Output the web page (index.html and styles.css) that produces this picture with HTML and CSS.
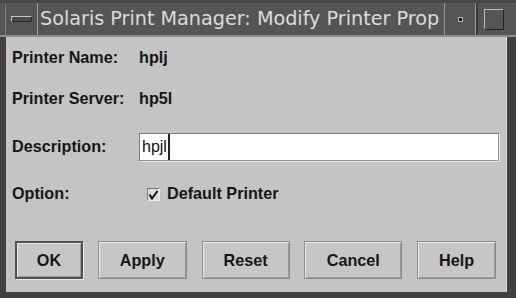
FILE: index.html
```html
<!DOCTYPE html>
<html>
<head>
<meta charset="utf-8">
<link rel="stylesheet" href="styles.css">
</head>
<body>
<div class="window">
  <div class="titlebar">
    <div class="menu-btn"><span class="menu-bar"></span></div>
    <div class="title">Solaris Print Manager: Modify Printer Prop</div>
    <div class="min-btn"><span class="min-dot"></span></div>
    <div class="max-btn"><span class="max-box"></span></div>
  </div>
  <div class="content">
    <div class="form">
      <div class="row r1"><span class="label">Printer Name:</span><span class="value">hplj</span></div>
      <div class="row r2"><span class="label">Printer Server:</span><span class="value">hp5l</span></div>
      <div class="row r3"><span class="label">Description:</span>
        <div class="field"><span class="field-text">hpjl</span><span class="caret"></span></div>
      </div>
      <div class="row r4"><span class="label">Option:</span>
        <span class="check"><svg width="11" height="11" viewBox="0 0 11 11"><path d="M1.5 5.5 L4 9.5 L9.5 2" fill="none" stroke="#111" stroke-width="2"/></svg></span>
        <span class="value">Default Printer</span>
      </div>
    </div>
    <div class="buttons">
      <div class="btn default w-ok">OK</div>
      <div class="btn w-apply">Apply</div>
      <div class="btn w-reset">Reset</div>
      <div class="btn w-cancel">Cancel</div>
      <div class="btn w-help">Help</div>
    </div>
  </div>
</div>
</body>
</html>
```
FILE: styles.css
```css
html, body {
  margin: 0;
  padding: 0;
  background: #3c3c3c;
}
.window {
  width: 516px;
  height: 298px;
  background: #404040;
  display: flex;
  flex-direction: column;
  box-sizing: border-box;
  overflow: hidden;
}
.titlebar {
  height: 37px;
  flex: none;
  display: flex;
  box-sizing: border-box;
  background: #555555;
  border-top: 3px solid #474747;
  border-bottom: 2px solid #8c8c8c;
  padding-left: 5px;
  padding-right: 6px;
}
.menu-btn {
  width: 31px;
  border-left: 1px solid #7a7a7a;
  border-right: 1px solid #9a9a9a;
  display: flex;
  align-items: center;
  justify-content: center;
  flex: none;
}
.menu-bar {
  display: block;
  width: 19px;
  height: 4px;
  background: #4a4a4a;
  border: 1px solid #c8c8c8;
  border-right-color: #2a2a2a;
  border-bottom-color: #2a2a2a;
}
.title {
  flex: 1;
  min-width: 0;
  white-space: nowrap;
  font-family: "DejaVu Sans", sans-serif;
  font-size: 19.2px;
  color: #dcdcdc;
  line-height: 32px;
  padding-left: 2px;
  border-right: 1px solid #9a9a9a;
}
.min-btn {
  width: 30px;
  flex: none;
  display: flex;
  align-items: center;
  justify-content: center;
  border-right: 1px solid #9a9a9a;
}
.min-dot {
  display: block;
  width: 3px;
  height: 3px;
  background: #111;
  border: 1px solid #bbb;
}
.max-btn {
  width: 32px;
  flex: none;
  display: flex;
  align-items: center;
  justify-content: center;
  border-left: 2px solid #3a3a3a;
}
.max-box {
  display: block;
  width: 18px;
  height: 19px;
  border: 1px solid #bdbdbd;
  border-right-color: #222;
  border-bottom-color: #222;
}
.content {
  flex: 1;
  background: #c4c4c4;
  margin: 0 9px 6px 6px;
  display: flex;
  flex-direction: column;
  font-family: "Liberation Sans", Arial, sans-serif;
  font-weight: bold;
  font-size: 16.2px;
  color: #161616;
  border-right: 1px solid #d8d8d8;
}
.form {
  display: flex;
  flex-direction: column;
  padding-left: 6px;
}
.row {
  display: flex;
  align-items: center;
}
.r1 { height: 40px; }
.r2 { height: 42px; }
.r3 { height: 54px; }
.r4 { height: 40px; }
.label {
  width: 127px;
  flex: none;
}
.field {
  flex: 1;
  margin-right: 7px;
  height: 28px;
  box-sizing: border-box;
  background: #ffffff;
  border: 1px solid #7a7a7a;
  border-right-color: #909090;
  border-bottom-color: #909090;
  box-shadow: 1px 1px 0 #ececec;
  display: flex;
  align-items: center;
  padding-left: 2px;
  margin-top: 2px;
}
.field-text {
  font-weight: normal;
  font-size: 16px;
  font-family: "Liberation Sans", Arial, sans-serif;
  color: #111;
}
.caret {
  display: block;
  width: 2px;
  height: 26px;
  background: #222;
  margin-left: 1px;
}
.check {
  width: 13px;
  height: 13px;
  box-sizing: border-box;
  margin-left: 8px;
  margin-right: 7px;
  margin-top: 2px;
  background: #dcdcdc;
  border: 1px solid #7a7a7a;
  border-right-color: #eeeeee;
  border-bottom-color: #eeeeee;
  display: flex;
  align-items: center;
  justify-content: center;
}
.check svg { display: block; }
.buttons {
  margin-top: 28px;
  display: flex;
  justify-content: space-between;
  padding: 0 10px 0 9px;
}
.btn {
  height: 38px;
  box-sizing: border-box;
  display: flex;
  align-items: center;
  justify-content: center;
  border: 1px solid #8a8a8a;
  box-shadow: inset 1px 1px 0 #ececec, inset -1px -1px 0 #9a9a9a;
  background: #c6c6c6;
}
.btn.default {
  border: 2px solid #505050;
  box-shadow: inset 1px 1px 0 #e6e6e6, inset -1px -1px 0 #9a9a9a, 1px 1px 0 #eaeaea;
}
.w-ok { width: 68px; }
.w-apply { width: 89px; }
.w-reset { width: 88px; }
.w-cancel { width: 98px; }
.w-help { width: 79px; }
```
